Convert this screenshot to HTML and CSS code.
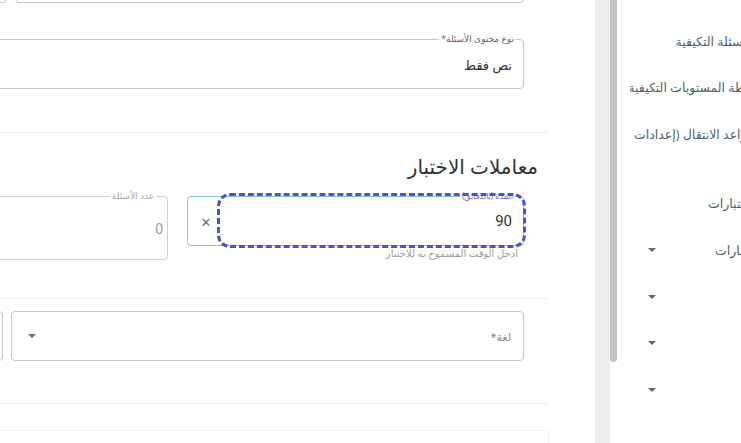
FILE: index.html
```html
<!DOCTYPE html>
<html lang="ar">
<head>
    <meta charset="utf-8">
    <title>إعدادات الاختبار</title>
    <link rel="stylesheet" href="styles.css">
</head>
<body>
<div class="app">
    <aside class="sidebar">
        <div class="sidebar_scroll"><div class="sidebar_thumb"></div></div>
        <ul class="nav">
            <li class="nav_item"><span class="nav_text">الأسئلة التكيفية</span></li>
            <li class="nav_item"><span class="nav_text">خطة المستويات التكيفية</span></li>
            <li class="nav_item"><span class="nav_text">قواعد الانتقال (إعدادات حذف الأسئلة)</span></li>
            <li class="nav_item nav_group"><span class="nav_text">الاختبارات</span></li>
            <li class="nav_item nav_sub"><span class="nav_text">الاختبارات</span><span class="caret"></span></li>
            <li class="nav_item nav_sub"><span class="nav_text"></span><span class="caret"></span></li>
            <li class="nav_item nav_sub"><span class="nav_text"></span><span class="caret"></span></li>
            <li class="nav_item nav_sub"><span class="nav_text"></span><span class="caret"></span></li>
        </ul>
    </aside>
    <div class="gutter"></div>
    <main class="main">
        <div class="section">
            <div class="row row_top">
                <div class="box box_main"></div>
                <div class="box box_side"></div>
            </div>
            <fieldset class="field">
                <legend>نوع محتوى الأسئلة*</legend>
                <div class="field_value">نص فقط</div>
            </fieldset>
        </div>

        <div class="section section_params">
            <h3 class="section_title">معاملات الاختبار</h3>
            <div class="row row_params">
                <div class="col_duration">
                    <fieldset class="field field_focus">
                        <legend>المدة (بالدقائق)</legend>
                        <input class="field_input" type="text" value="90">
                        <button class="clear_btn" type="button">&#x2715;</button>
                    </fieldset>
                    <div class="helper">ادخل الوقت المسموح به للاختبار</div>
                </div>
                <fieldset class="field field_disabled">
                    <legend>عدد الأسئلة</legend>
                    <div class="field_value">0</div>
                </fieldset>
            </div>
        </div>

        <div class="section section_lang">
            <div class="row row_lang">
                <div class="select">
                    <span class="select_placeholder">لغة*</span>
                    <span class="caret"></span>
                </div>
                <div class="select select_side"></div>
            </div>
        </div>

        <div class="section section_last">
            <div class="card"></div>
        </div>
    </main>
</div>
</body>
</html>
```

FILE: styles.css
```css
html, body {
  margin: 0;
  height: 100%;
  overflow: hidden;
  background: #fff;
}

body {
  font-family: "Noto Sans", "DejaVu Sans", sans-serif;
  color: #333;
}

.app {
  display: flex;
  direction: rtl;
  width: 1172px;
  height: 443px;
  margin-left: -382px;
}

/* sidebar */
.sidebar {
  width: 180px;
  flex-shrink: 0;
  display: flex;
  background: #fff;
}

.sidebar_scroll {
  order: 2;
  width: 8px;
  flex-shrink: 0;
  background: #fff;
}

.sidebar_thumb {
  width: 7px;
  height: 362px;
  margin-right: 1px;
  background: #c3c3c3;
  border-radius: 0 0 4px 4px;
}

.nav {
  list-style: none;
  margin: 0;
  padding: 18px 0 0 0;
  flex: 1;
  min-width: 0;
}

.nav_item {
  height: 46.5px;
  display: flex;
  align-items: center;
  padding: 0 37px 0 12px;
  font-size: 12.5px;
  color: #4f5f6e;
  white-space: nowrap;
}

.nav_group {
  margin-top: 23px;
  padding-right: 31px;
}

.nav_sub {
  padding-right: 24px;
}

.nav_text {
  flex: 1;
  min-width: 0;
  overflow: hidden;
}

.nav_item .caret {
  margin-left: 18px;
}

.caret {
  flex-shrink: 0;
  margin-right: auto;
  width: 0;
  height: 0;
  border-left: 4px solid transparent;
  border-right: 4px solid transparent;
  border-top: 4px solid #666;
}

.gutter {
  width: 15px;
  flex-shrink: 0;
  background: #ededed;
}

/* main */
.main {
  width: 977px;
  flex-shrink: 0;
  padding-right: 47px;
  box-sizing: border-box;
  background: #fff;
}

.section {
  padding: 0 24px 0 0;
  border-bottom: 1px solid #efefef;
}

.row {
  display: flex;
}

.row_top {
  gap: 8px;
  margin-top: -47px;
}

.box {
  height: 48px;
  border: 1px solid #c8c8c8;
  border-radius: 4px;
}

.box_main {
  width: 507px;
}

.box_side {
  flex: 1;
}

.field {
  margin: 30px 0 0 0;
  padding: 0 11px 3px 11px;
  border: 1px solid #c8c8c8;
  border-radius: 4px;
  display: flex;
  align-items: center;
}

.field legend {
  padding: 0 2px;
  margin-right: -4px;
  font-size: 9px;
  line-height: 12px;
  color: #666;
}

.field_value {
  height: 40px;
  line-height: 40px;
  font-size: 13px;
  color: #333;
}

.section:first-child {
  padding-bottom: 43px;
}

/* test parameters */
.section_params {
  padding-top: 22px;
  padding-bottom: 38px;
}

.section_title {
  margin: 0 -14px 0 0;
  font-size: 20px;
  line-height: 24px;
  font-weight: normal;
  color: #333;
}

.row_params {
  gap: 19px;
  margin-top: 11px;
}

.col_duration {
  width: 337px;
  flex-shrink: 0;
}

.row_params .field {
  margin: 0;
}

.field_disabled {
  flex: 1;
  border-color: #cfcfcf;
  padding-right: 4px;
}

.field_disabled legend {
  color: #aaa;
  margin-right: 7px;
}

.field_disabled .field_value {
  color: #9a9a9a;
  font-family: Roboto, sans-serif;
  font-size: 14px;
}

.field_focus {
  border-color: #86c6d2;
  padding: 0 0 3px 0;
}

.field_focus legend {
  color: #5a6fd0;
  font-size: 8px;
  margin-right: 8px;
}

.field_input {
  flex: 1;
  margin-top: -6px;
  margin-bottom: -3px;
  height: 49px;
  padding: 0 11px 0 0;
  border: none;
  border-radius: 10px;
  outline: 3px dashed #4d4fd9;
  outline-offset: 0;
  background: transparent;
  font-family: Roboto, sans-serif;
  font-size: 15px;
  color: #333;
  direction: rtl;
}

.clear_btn {
  order: 1;
  width: 28px;
  border: none;
  background: transparent;
  color: #6f6f6f;
  font-family: "DejaVu Sans", sans-serif;
  font-size: 13px;
  padding: 0;
  margin-left: 4px;
  cursor: pointer;
}

.helper {
  margin: 0 6px 0 0;
  font-size: 10px;
  color: #9c9c9c;
}

/* language */
.section_lang {
  padding-top: 12px;
  padding-bottom: 42px;
}

.row_lang {
  gap: 8px;
}

.select {
  width: 483px;
  height: 48px;
  flex-shrink: 0;
  display: flex;
  align-items: center;
  padding: 0 12px 0 16px;
  border: 1px solid #c8c8c8;
  border-radius: 4px;
}

.select_side {
  flex: 1;
  width: auto;
  flex-shrink: 1;
}

.select_placeholder {
  font-size: 11px;
  color: #888;
}

.section_last {
  border-bottom: none;
  padding-top: 26px;
  padding-right: 0;
}

.card {
  height: 40px;
  margin-right: -1px;
  border: 1px solid #f0f0f0;
  border-bottom: none;
}
```
